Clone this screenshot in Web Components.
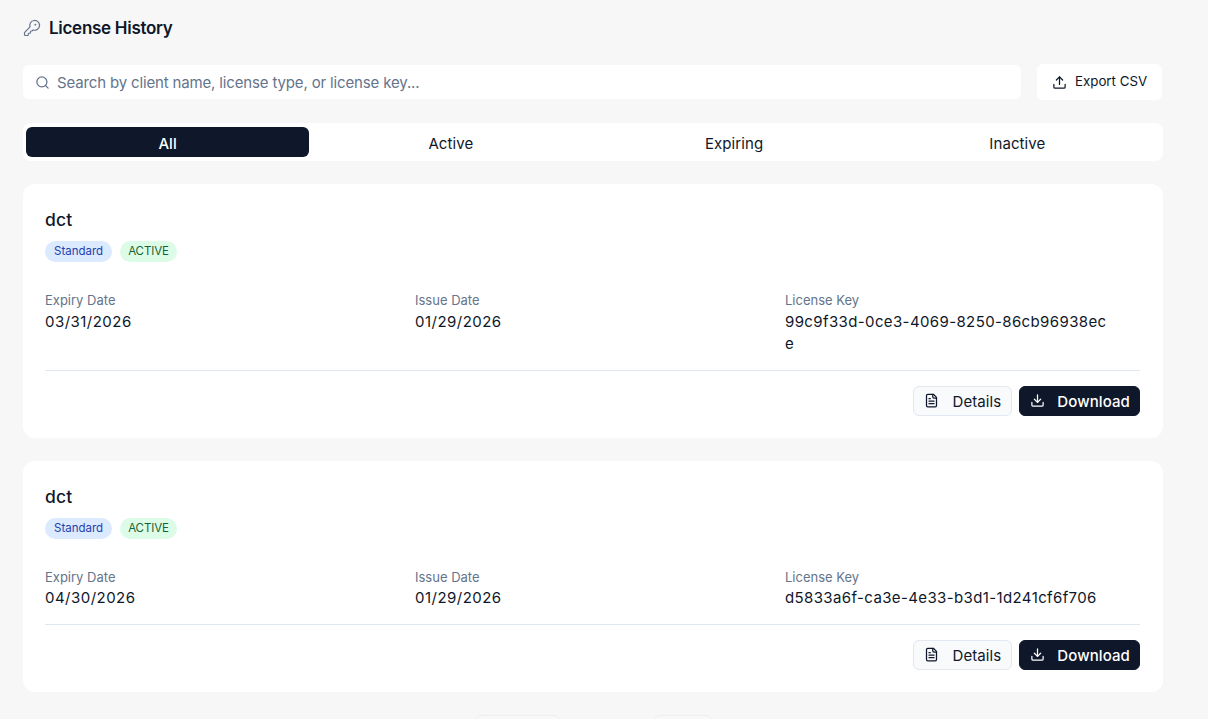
<!DOCTYPE html>
<html>
<head>
<meta charset="utf-8">
<style>
  html, body { margin: 0; height: 719px; overflow: hidden; background: #f7f7f7; }
  body { font-family: Inter, "Noto Sans", sans-serif; color: #0f172a; }
</style>
</head>
<body>
<license-history></license-history>

<template id="btn-tpl">
  <style>
    :host { display: block; }
    button {
      display: flex; align-items: center; height: 30px; box-sizing: border-box;
      border-radius: 6px; font: 400 15px Inter, sans-serif; letter-spacing: .1px;
      padding: 0 10px; cursor: pointer;
    }
    :host([variant=outline]) button { background: #f8fafc; border: 1px solid #e2e8f0; color: #0f172a; }
    :host([variant=solid]) button { background: #0f172a; border: 1px solid #0f172a; color: #fff; font-weight: 500; padding-right: 9px; }
    svg { margin-right: 13px; margin-top: -2px; }
    :host([variant=solid]) svg { margin-right: 12px; }
  </style>
  <button><slot name="icon"></slot><slot></slot></button>
</template>

<script>
const ICONS = {
  key: '<path d="M2.586 17.414A2 2 0 0 0 2 18.828V21a1 1 0 0 0 1 1h3a1 1 0 0 0 1-1v-1a1 1 0 0 1 1-1h1a1 1 0 0 0 1-1v-1a1 1 0 0 1 1-1h.172a2 2 0 0 0 1.414-.586l.814-.814a6.5 6.5 0 1 0-4-4z"/><circle cx="16.5" cy="7.5" r=".5" fill="currentColor"/>',
  search: '<circle cx="11" cy="11" r="8"/><path d="m21 21-4.3-4.3"/>',
  upload: '<path d="M21 15v4a2 2 0 0 1-2 2H5a2 2 0 0 1-2-2v-4"/><path d="m17 8-5-5-5 5"/><path d="M12 3v12"/>',
  download: '<path d="M21 15v4a2 2 0 0 1-2 2H5a2 2 0 0 1-2-2v-4"/><path d="m7 10 5 5 5-5"/><path d="M12 15V3"/>',
  file: '<path d="M15 2H6a2 2 0 0 0-2 2v16a2 2 0 0 0 2 2h12a2 2 0 0 0 2-2V7Z"/><path d="M14 2v4a2 2 0 0 0 2 2h4"/><path d="M16 13H8"/><path d="M16 17H8"/><path d="M10 9H8"/>'
};
const icon = (name, size) =>
  `<svg viewBox="0 0 24 24" width="${size}" height="${size}" fill="none" stroke="currentColor" stroke-width="2" stroke-linecap="round" stroke-linejoin="round">${ICONS[name]}</svg>`;

class ActionButton extends HTMLElement {
  connectedCallback() {
    this.attachShadow({ mode: 'open' });
    this.shadowRoot.append(document.getElementById('btn-tpl').content.cloneNode(true));
    this.shadowRoot.querySelector('slot[name=icon]').outerHTML =
      icon(this.getAttribute('icon'), 15);
  }
}
customElements.define('action-button', ActionButton);

class LicenseCard extends HTMLElement {
  connectedCallback() {
    this.attachShadow({ mode: 'open' });
    this.shadowRoot.innerHTML = `
      <style>
        :host { display: block; background: #fff; border-radius: 12px; padding: 22px 23px 22px 22px; }
        h3 { margin: 0; font: 500 17.5px/28px Inter, sans-serif; color: #0f172a; height: 28px; letter-spacing: .2px; }
        .badges { display: flex; gap: 8px; margin-top: 7px; }
        .badge { font: 400 11.5px/21px Inter, sans-serif; height: 21px; border-radius: 11px; padding: 0 9px; }
        .type { background: #dbeafe; color: #1e40af; }
        .status { background: #dcfce7; color: #166534; padding: 0 8px; letter-spacing: -.1px; }
        .grid { display: grid; grid-template-columns: repeat(3, 326px); column-gap: 44px; margin-top: 28px; }
        .label { font: 400 13px/20px Inter, sans-serif; color: #64748b; }
        .value { font: 400 15px/22.5px Inter, sans-serif; color: #0f172a; word-break: break-all; letter-spacing: .47px; margin-top: .5px; }
        .value.key { letter-spacing: .38px; }
        .foot { border-top: 1px solid #e2e8f0; margin-top: 14.5px; padding-top: 15px; display: flex; justify-content: flex-end; gap: 7px; }
      </style>
      <h3>${this.getAttribute('client')}</h3>
      <div class="badges"><span class="badge type">Standard</span><span class="badge status">ACTIVE</span></div>
      <div class="grid">
        <div><div class="label">Expiry Date</div><div class="value">${this.getAttribute('expiry')}</div></div>
        <div><div class="label">Issue Date</div><div class="value">${this.getAttribute('issue')}</div></div>
        <div><div class="label">License Key</div><div class="value key">${this.getAttribute('key')}</div></div>
      </div>
      <div class="foot">
        <action-button variant="outline" icon="file">Details</action-button>
        <action-button variant="solid" icon="download">Download</action-button>
      </div>`;
  }
}
customElements.define('license-card', LicenseCard);

class FilterTabs extends HTMLElement {
  connectedCallback() {
    this.attachShadow({ mode: 'open' });
    const tabs = ['All', 'Active', 'Expiring', 'Inactive'];
    this.shadowRoot.innerHTML = `
      <style>
        :host { display: grid; grid-template-columns: repeat(4, 1fr); background: #fff; border-radius: 8px; padding: 4px 4px 4px 3px; height: 38px; box-sizing: border-box; }
        div { display: flex; align-items: center; justify-content: center; padding-top: 3px; box-sizing: border-box; font: 400 15px Inter, sans-serif; letter-spacing: .1px; color: #0f172a; border-radius: 6px; }
        .on { background: #0f172a; color: #fff; font-weight: 500; }
      </style>
      ${tabs.map((t, i) => `<div class="${i ? '' : 'on'}">${t}</div>`).join('')}`;
  }
}
customElements.define('filter-tabs', FilterTabs);

class LicenseHistory extends HTMLElement {
  connectedCallback() {
    this.attachShadow({ mode: 'open' });
    this.shadowRoot.innerHTML = `
      <style>
        :host { display: block; width: 1140px; padding: 16px 0 0 23px; }
        header { display: flex; align-items: center; gap: 8px; height: 24px; font: 600 17px Inter, sans-serif; letter-spacing: -.28px; color: #0f172a; }
        header svg { color: #64748b; stroke-width: 1.6; }
        .tools { display: flex; gap: 16px; margin-top: 24px; align-items: center; padding-right: 1px; }
        .search { flex: 1; height: 34px; background: #fff; border-radius: 6px; display: flex; align-items: center; gap: 7.5px; padding: 0 11.5px; color: #64748b; font: 400 15px Inter, sans-serif; letter-spacing: -.15px; }
        .export { height: 36px; width: 125px; box-sizing: border-box; background: #fff; border-radius: 6px; display: flex; align-items: center; gap: 8px; padding: 0 0 2px 15px; font: 400 13.3px Inter, sans-serif; color: #0f172a; }
        .export svg { margin-top: 2px; }
        filter-tabs { margin-top: 23px; }
        license-card { margin-top: 23px; }
        license-card + license-card { margin-top: 22.5px; }
        .pager { display: flex; margin-top: 23px; height: 30px; }
        .pager span { height: 30px; box-sizing: border-box; background: #f8f8f9; border: 1px solid #eceef2; border-radius: 6px; }
      </style>
      <header>${icon('key', 18)}<span>License History</span></header>
      <div class="tools">
        <div class="search">${icon('search', 15)}<span>Search by client name, license type, or license key...</span></div>
        <div class="export">${icon('upload', 15)}<span>Export CSV</span></div>
      </div>
      <filter-tabs></filter-tabs>
      <license-card client="dct" expiry="03/31/2026" issue="01/29/2026" key="99c9f33d-0ce3-4069-8250-86cb96938ece"></license-card>
      <license-card client="dct" expiry="04/30/2026" issue="01/29/2026" key="d5833a6f-ca3e-4e33-b3d1-1d241cf6f706"></license-card>
      <div class="pager"><span style="margin-left:452px;width:85px"></span><span style="margin-left:94px;width:58px"></span></div>`;
  }
}
customElements.define('license-history', LicenseHistory);
</script>
</body>
</html>
